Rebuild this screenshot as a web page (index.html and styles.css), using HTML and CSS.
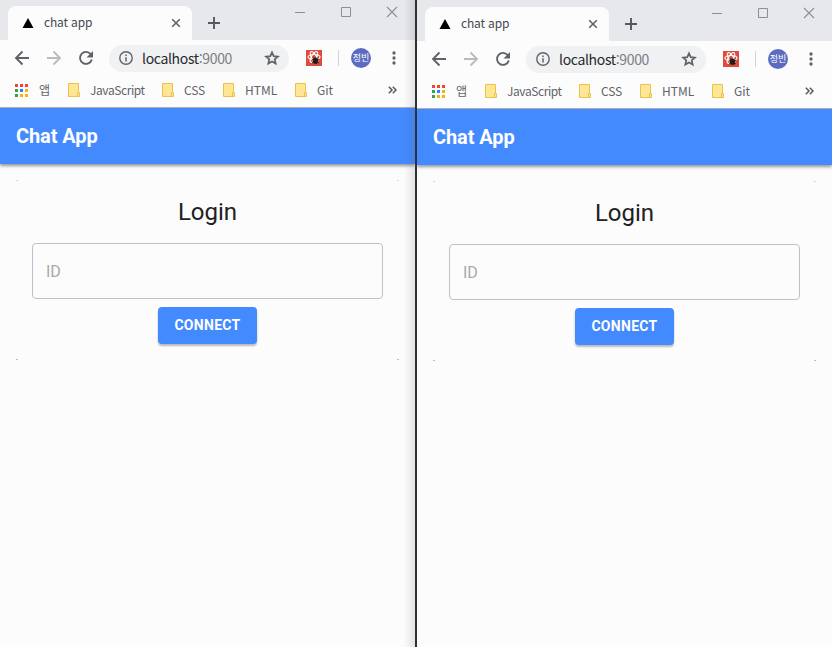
FILE: index.html
```html
<!DOCTYPE html>
<html lang="ko">
<head>
<meta charset="utf-8">
<title>chat app</title>
<link rel="stylesheet" href="styles.css">
</head>
<body>
<svg class="defs" aria-hidden="true">
  <symbol id="tri" viewBox="0 0 12 12"><path d="M6 1l5.500 10H.5z" fill="#000"/></symbol>
  <symbol id="close" viewBox="0 0 10 10"><path d="M1.200 1.200l7.600 7.600M8.800 1.200l-7.600 7.600" stroke="#5f6368" stroke-width="1.600"/></symbol>
  <symbol id="plus" viewBox="0 0 12 12"><path d="M6 0v12M0 6h12" stroke="#55585d" stroke-width="1.900"/></symbol>
  <symbol id="min" viewBox="0 0 12 12"><path d="M1 6.500h10" stroke="#8e8e92"/></symbol>
  <symbol id="max" viewBox="0 0 12 12"><path d="M1.500 1.500h9v9h-9z" fill="none" stroke="#8e8e92"/></symbol>
  <symbol id="x" viewBox="0 0 12 12"><path d="M1 1l10 10M11 1L1 11" stroke="#8e8e92" stroke-width="1.100"/></symbol>
  <symbol id="arrow" viewBox="0 0 16 16"><path d="M15 8H2.500M8.500 1.500L2 8l6.500 6.500" fill="none" stroke="currentColor" stroke-width="1.900"/></symbol>
  <symbol id="reload" viewBox="0 0 16 16"><path d="M13 4.500A6 6 0 1 0 13.800 9.500" fill="none" stroke="#5f6368" stroke-width="1.900"/><path d="M15 1v6.500H8.500z" fill="#5f6368"/></symbol>
  <symbol id="info" viewBox="0 0 14 14"><circle cx="7" cy="7" r="6.200" fill="none" stroke="#5f6368" stroke-width="1.400"/><path d="M7 6.200v4.300M7 3.500v1.500" stroke="#5f6368" stroke-width="1.500"/></symbol>
  <symbol id="star" viewBox="0 0 16 16"><path d="M8 2.300l1.700 3.900 4.200.4-3.200 2.800 1 4.100L8 11.400l-3.700 2.100 1-4.100-3.200-2.800 4.200-.4z" fill="none" stroke="#5f6368" stroke-width="1.700"/></symbol>
  <symbol id="react" viewBox="0 0 16 16"><path d="M0 0h16v16H0z" fill="#dc4b3d"/><g fill="none" stroke="#fff" stroke-width="1.200"><ellipse cx="8" cy="7" rx="6" ry="2.500"/><ellipse cx="8" cy="7" rx="6" ry="2.500" transform="rotate(60 8 7)"/><ellipse cx="8" cy="7" rx="6" ry="2.500" transform="rotate(120 8 7)"/></g><ellipse cx="9.500" cy="10.800" rx="2.700" ry="3.300" fill="#251b1b"/><path d="M6 9l7 4M6 13l7-4M7.500 7.500l1.500 2M11.500 7.500l-1.500 2" stroke="#251b1b" stroke-width=".9"/></symbol>
  <symbol id="dots" viewBox="0 0 4 14"><g fill="#5f6368"><circle cx="2" cy="2" r="1.650"/><circle cx="2" cy="7" r="1.650"/><circle cx="2" cy="12" r="1.650"/></g></symbol>
  <symbol id="apps" viewBox="0 0 13 13"><path d="M0 0h3v3H0zM5 0h3v3H5zM10 0h3v3h-3z" fill="#f44336"/><path d="M0 5h3v3H0zM0 10h3v3H0z" fill="#34a05a"/><path d="M5 5h3v3H5z" fill="#1e88ff"/><path d="M10 5h3v3h-3zM5 10h3v3H5zM10 10h3v3h-3z" fill="#f9b208"/></symbol>
  <symbol id="folder" viewBox="0 0 12 14"><path d="M.5.500h10v9h1v4H.5z" fill="#ffe694" stroke="#e9c44b"/><path d="M9.500 13V9.500h1.500" fill="none" stroke="#e9c44b"/></symbol>
  <symbol id="more" viewBox="0 0 9 8"><path d="M.8.8L4 4 .8 7.200M4.800.8L8 4 4.800 7.200" fill="none" stroke="#55585d" stroke-width="1.500"/></symbol>
</svg>
<div class="desktop">
  <section class="window left">
    <header class="tabs">
      <div class="tab"><svg class="i12"><use href="#tri"/></svg><span>chat app</span><svg class="i10"><use href="#close"/></svg></div>
      <svg class="i12 new"><use href="#plus"/></svg>
      <div class="controls"><svg class="i12"><use href="#min"/></svg><svg class="i12"><use href="#max"/></svg><svg class="i12"><use href="#x"/></svg></div>
    </header>
    <nav class="toolbar">
      <svg class="i16"><use href="#arrow"/></svg><svg class="i16 forward"><use href="#arrow"/></svg><svg class="i16"><use href="#reload"/></svg>
      <div class="address"><svg class="i14"><use href="#info"/></svg><span class="url">localhost<i>:9000</i></span><svg class="i16"><use href="#star"/></svg></div>
      <svg class="i16 ext"><use href="#react"/></svg><span class="sep"></span><span class="avatar">정빈</span><svg class="dots"><use href="#dots"/></svg>
    </nav>
    <nav class="bookmarks">
      <svg class="apps"><use href="#apps"/></svg><span class="ko">앱</span>
      <svg class="folder"><use href="#folder"/></svg><span class="js">JavaScript</span>
      <svg class="folder"><use href="#folder"/></svg><span class="css">CSS</span>
      <svg class="folder"><use href="#folder"/></svg><span class="html">HTML</span>
      <svg class="folder"><use href="#folder"/></svg><span class="git">Git</span>
      <svg class="more"><use href="#more"/></svg>
    </nav>
    <main class="page">
      <div class="appbar">Chat App</div>
      <div class="card"><h1>Login</h1><div class="field">ID</div><button>CONNECT</button></div>
    </main>
  </section>
  <div class="divider"></div>
  <section class="window right">
    <header class="tabs">
      <div class="tab"><svg class="i12"><use href="#tri"/></svg><span>chat app</span><svg class="i10"><use href="#close"/></svg></div>
      <svg class="i12 new"><use href="#plus"/></svg>
      <div class="controls"><svg class="i12"><use href="#min"/></svg><svg class="i12"><use href="#max"/></svg><svg class="i12"><use href="#x"/></svg></div>
    </header>
    <nav class="toolbar">
      <svg class="i16"><use href="#arrow"/></svg><svg class="i16 forward"><use href="#arrow"/></svg><svg class="i16"><use href="#reload"/></svg>
      <div class="address"><svg class="i14"><use href="#info"/></svg><span class="url">localhost<i>:9000</i></span><svg class="i16"><use href="#star"/></svg></div>
      <svg class="i16 ext"><use href="#react"/></svg><span class="sep"></span><span class="avatar">정빈</span><svg class="dots"><use href="#dots"/></svg>
    </nav>
    <nav class="bookmarks">
      <svg class="apps"><use href="#apps"/></svg><span class="ko">앱</span>
      <svg class="folder"><use href="#folder"/></svg><span class="js">JavaScript</span>
      <svg class="folder"><use href="#folder"/></svg><span class="css">CSS</span>
      <svg class="folder"><use href="#folder"/></svg><span class="html">HTML</span>
      <svg class="folder"><use href="#folder"/></svg><span class="git">Git</span>
      <svg class="more"><use href="#more"/></svg>
    </nav>
    <main class="page">
      <div class="appbar">Chat App</div>
      <div class="card"><h1>Login</h1><div class="field">ID</div><button>CONNECT</button></div>
    </main>
  </section>
</div>
</body>
</html>
```
FILE: styles.css
```css
* { box-sizing: border-box; }
body { margin: 0; overflow: hidden; font-family: "Noto Sans CJK KR", sans-serif; color: #5f6368; }
svg { display: block; flex: none; }
.defs { width: 0; height: 0; position: absolute; }
.desktop { display: flex; height: 647px; background: #fcfcfc; }
.window { width: 415px; height: 647px; display: flex; flex-direction: column; overflow: hidden; background: #fcfcfc; }
.right { padding-top: 1px; background: linear-gradient(#e7e8ec 1px, #fcfcfc 1px); }
.left { position: relative; }
.left::after { content: ""; position: absolute; top: 0; right: 0; bottom: 0; width: 11px; background: linear-gradient(to right, #50506000, #50506026); }
.divider { width: 2px; background: #303136; }
.i10 { width: 10px; height: 10px; }
.i12 { width: 12px; height: 12px; }
.i14 { width: 14px; height: 14px; }
.i16 { width: 16px; height: 16px; }

.tabs { height: 40px; flex: none; display: flex; background: #e7e8ec; padding: 6px 0 0 8px; }
.tab { width: 184px; height: 34px; border-radius: 8px 8px 0 0; background: #fcfcfc; display: flex; align-items: center; padding: 0 11px 0 14px; font-size: 12px; color: #45484d; }
.tab span { margin-left: 10px; flex: 1; white-space: nowrap; line-height: 16px; letter-spacing: -.15px; position: relative; top: -1px; }
.new { margin: 11px 0 0 16px; }
.controls { display: flex; gap: 34px; margin-left: 74px; }

.toolbar { height: 36px; flex: none; display: flex; align-items: center; padding-left: 14px; color: #5f6368; }
.forward { color: #b9bbbe; transform: scaleX(-1); margin: 0 16px; }
.address { width: 180px; height: 27px; margin-left: 15px; border-radius: 14px; background: #f0f1f3; display: flex; align-items: center; padding: 0 9px 0 10px; }
.url { flex: 1; margin-left: 9px; font-size: 14px; line-height: 20px; padding-bottom: 1px; letter-spacing: -.34px; color: #26282b; white-space: nowrap; }
.url i { font-style: normal; color: #7b7e83; }
.ext { margin-left: 17px; }
.sep { width: 1px; height: 16px; margin-left: 16px; background: #d2d4d7; }
.avatar { width: 20px; height: 20px; margin-left: 12px; border-radius: 50%; background: #5c6bc0; color: #fff; font-size: 9px; line-height: 19px; text-align: center; white-space: nowrap; }
.dots { width: 4px; height: 14px; margin-left: 20.500px; }

.bookmarks { height: 32px; flex: none; display: flex; align-items: center; padding: 0 0 3px 15px; border-bottom: 1px solid #b3b3b5; font-size: 12px; line-height: 16px; }
.bookmarks span { white-space: nowrap; flex: none; padding-bottom: 1px; }
.apps { width: 13px; height: 13px; }
.folder { width: 12px; height: 14px; margin-right: 10px; }
.ko { margin-left: 11px; width: 29px; font-size: 12px; }
.js { width: 72px; letter-spacing: -.42px; }
.css { width: 39px; letter-spacing: -.2px; }
.html { width: 50px; }
.git { width: 71px; }
.more { width: 9px; height: 8px; }

.page { flex: 1; font-family: Roboto, sans-serif; }
.appbar { height: 56px; padding-left: 16px; background: #448aff; color: #fff; font-size: 20px; font-weight: 700; letter-spacing: -.1px; line-height: 56px; box-shadow: 0 2px 3px #0006; }
.card {
  margin: 16px 16px 0; height: 180px; padding: 16px 16px 0; text-align: center;
  background:
    linear-gradient(#d8d8d8, #d8d8d8) 0 0 / 2px 1px no-repeat,
    linear-gradient(#d8d8d8, #d8d8d8) 100% 0 / 2px 1px no-repeat,
    linear-gradient(#bbb, #bbb) 0 100% / 2px 1px no-repeat,
    linear-gradient(#bbb, #bbb) 100% 100% / 2px 1px no-repeat;
}
.card h1 { margin: 0; color: #212121; font-size: 24px; font-weight: 400; line-height: 32px; }
.field { width: 351px; height: 56px; margin-top: 15px; border: 1px solid #c1c1c1; border-radius: 4px; padding-left: 13px; text-align: left; font-size: 16px; line-height: 55px; color: #a8a8a8; }
button { display: block; width: 99px; height: 37px; margin: 8px 0 0 126px; padding: 0; border: 0; border-radius: 4px; background: #448aff; color: #fff; font: 700 14px/37px Roboto, sans-serif; letter-spacing: .3px; box-shadow: 0 2px 2px #0004; }
```
